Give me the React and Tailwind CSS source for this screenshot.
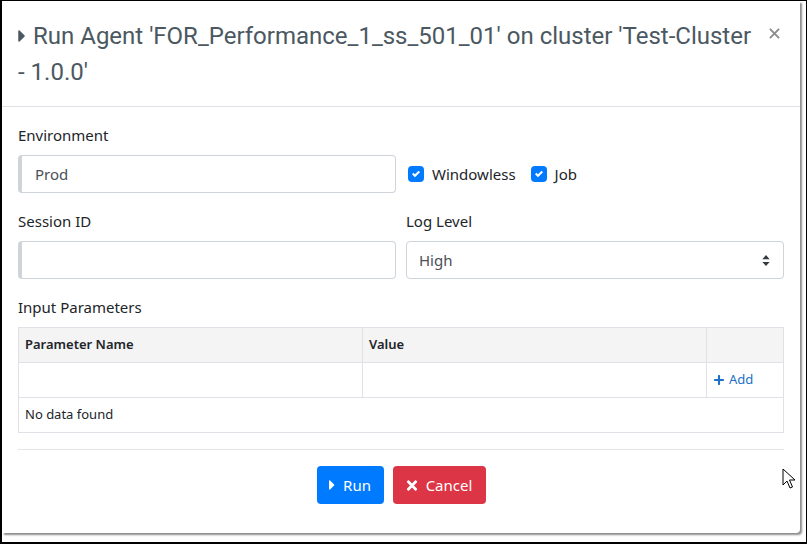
import React from "react";

const Caret = ({ className }) => (
  <svg viewBox="0 0 192 512" className={className} fill="currentColor">
    <path d="M0 384.662V127.338c0-17.818 21.543-26.741 34.142-14.142l128.662 128.662c7.81 7.81 7.81 20.474 0 28.284L34.142 398.804C21.543 411.404 0 402.48 0 384.662z" />
  </svg>
);

const Times = ({ className }) => (
  <svg viewBox="0 0 352 512" className={className} fill="currentColor">
    <path d="M242.72 256l100.07-100.07c12.28-12.28 12.28-32.19 0-44.48l-22.24-22.24c-12.28-12.28-32.19-12.28-44.48 0L176 189.28 75.930 89.21c-12.28-12.28-32.19-12.28-44.48 0L9.21 111.45c-12.28 12.28-12.28 32.19 0 44.48L109.28 256 9.21 356.07c-12.28 12.28-12.28 32.19 0 44.48l22.24 22.24c12.28 12.28 32.2 12.28 44.48 0L176 322.72l100.07 100.07c12.28 12.28 32.2 12.28 44.48 0l22.24-22.24c12.28-12.28 12.28-32.19 0-44.48L242.72 256z" />
  </svg>
);

const Plus = ({ className }) => (
  <svg viewBox="0 64 448 384" className={className} fill="currentColor">
    <path d="M416 208H272V64c0-17.67-14.33-32-32-32h-32c-17.67 0-32 14.33-32 32v144H32c-17.67 0-32 14.33-32 32v32c0 17.67 14.33 32 32 32h144v144c0 17.67 14.33 32 32 32h32c17.67 0 32-14.33 32-32V304h144c17.67 0 32-14.33 32-32v-32c0-17.67-14.33-32-32-32z" />
  </svg>
);

const Check = () => (
  <span className="flex h-4 w-4 items-center justify-center rounded-[4px] bg-[#007bff]">
    <svg viewBox="0 0 8 8" className="h-2 w-2">
      <path fill="#fff" d="M6.564.75l-3.59 3.612-1.538-1.55L0 4.26l2.974 2.99L8 2.193z" />
    </svg>
  </span>
);

export default function App() {
  const body = { fontFamily: '"Noto Sans", "Open Sans", sans-serif' };
  return (
    <div className="relative h-[544px] w-[807px] overflow-hidden border-t border-r border-b-2 border-l-2 border-black bg-white" style={body}>
      <div className="w-[798px] rounded-br-[4px] bg-white pb-[29px] shadow-[2px_2px_2px_rgba(0,0,0,0.45)]">
        {/* Header */}
        <div className="flex items-start border-b border-[#dee2e6] pt-[17px] pr-[20px] pb-4 pl-4">
          <div
            className="flex-1 text-[24px] leading-[36px] text-[#4b5861]"
            style={{ fontFamily: 'Roboto, "Liberation Sans", sans-serif' }}
          >
            <span className="whitespace-nowrap">
              <Caret className="mr-[7px] inline-block h-[20px] w-[8px] align-[-2px]" />
              Run Agent 'FOR_Performance_1_ss_501_01' on cluster 'Test-Cluster
            </span>
            <br />
            - 1.0.0'
          </div>
          <button className="mt-[10px] text-[#8c8c8c]">
            <svg viewBox="0 0 12 12" className="h-[11px] w-[11px]">
              <path d="M1 1L11 11M11 1L1 11" stroke="currentColor" strokeWidth="2.1" />
            </svg>
          </button>
        </div>

        {/* Body */}
        <div className="px-4 pt-4 text-[15px] text-[#212529]">
          <div className="grid grid-cols-2 gap-x-[10px]">
            <div className="mb-4">
              <div className="mb-2 leading-6">Environment</div>
              <div className="flex h-[38px] items-center rounded-[4px] border border-l-4 border-[#ced4da] pl-[13px] text-[#495057]">
                Prod
              </div>
            </div>
            <div className="mb-4 flex items-end">
              <div className="flex h-[38px] items-center pl-[2px]">
                <Check />
                <span className="ml-2 mr-[15px]">Windowless</span>
                <Check />
                <span className="ml-2">Job</span>
              </div>
            </div>
            <div className="mb-4">
              <div className="mb-2 leading-6">Session ID</div>
              <div className="h-[38px] rounded-[4px] border border-l-4 border-[#ced4da]" />
            </div>
            <div className="mb-4">
              <div className="mb-2 leading-6">Log Level</div>
              <div className="flex h-[38px] items-center justify-between rounded-[4px] border border-[#ced4da] pr-[13px] pl-[12px] text-[#495057]">
                <span>High</span>
                <svg viewBox="0 0 8 12" className="h-[11px] w-[8px]">
                  <path d="M4 0L8 4.5H0z M4 12L0 7.5H8z" fill="#343a40" />
                </svg>
              </div>
            </div>
          </div>

          <div className="mb-2 leading-6">Input Parameters</div>
          <table className="w-full border-collapse text-[13px] text-[#212529]">
            <thead>
              <tr className="h-[35px] bg-[#f4f4f4]">
                <th className="w-[344px] border border-[#dee2e6] pl-[6px] text-left font-semibold">Parameter Name</th>
                <th className="w-[344px] border border-[#dee2e6] pl-[6px] text-left font-semibold">Value</th>
                <th className="border border-[#dee2e6]"></th>
              </tr>
            </thead>
            <tbody>
              <tr className="h-[35px]">
                <td className="border border-[#dee2e6]"></td>
                <td className="border border-[#dee2e6]"></td>
                <td className="border border-[#dee2e6] pl-[7px]">
                  <span className="inline-flex items-center text-[#2070c8]">
                    <Plus className="mr-[5px] h-[10px] w-[10px]" />
                    Add
                  </span>
                </td>
              </tr>
              <tr className="h-[35px]">
                <td colSpan={3} className="border border-[#dee2e6] pl-[6px]">No data found</td>
              </tr>
            </tbody>
          </table>

          <div className="mt-4 border-t border-[#e5e5e5]" />

          <div className="mt-4 flex justify-center gap-[9px]">
            <button className="flex h-[38px] w-[67px] items-center justify-center rounded-[4px] bg-[#007bff] text-[15px] text-white">
              <Caret className="mr-[8px] h-[16px] w-[6px]" />
              Run
            </button>
            <button className="flex h-[38px] w-[93px] items-center justify-center rounded-[4px] bg-[#dc3545] text-[15px] text-white">
              <Times className="mr-[8px] h-[15px] w-[12px]" />
              Cancel
            </button>
          </div>
        </div>
      </div>

      {/* mouse cursor */}
      <svg className="absolute left-[780px] top-[467px]" width="14" height="21" viewBox="0 0 14 21">
        <path d="M1 1V17L5 13L8 20L10.5 19L7.5 12H13L1 1Z" fill="#fff" stroke="#000" strokeWidth="1" strokeLinejoin="round" />
      </svg>
    </div>
  );
}
